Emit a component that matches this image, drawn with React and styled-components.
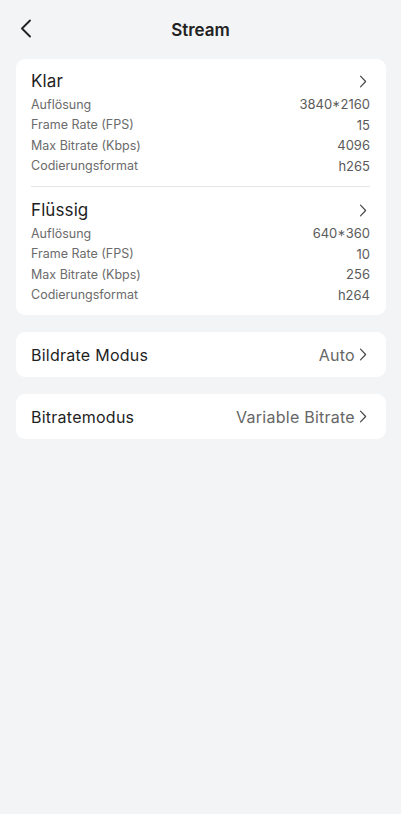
import React from 'react'
import styled, { createGlobalStyle } from 'styled-components'

const GlobalStyle = createGlobalStyle`
  html, body {
    margin: 0;
    padding: 0;
    background: #f3f4f6;
    font-family: Inter, "Noto Sans", "Liberation Sans", sans-serif;
    -webkit-font-smoothing: antialiased;
  }
`

const streams = [
  {
    name: 'Klar',
    rows: [
      ['Auflösung', '3840*2160'],
      ['Frame Rate (FPS)', '15'],
      ['Max Bitrate (Kbps)', '4096'],
      ['Codierungsformat', 'h265'],
    ],
  },
  {
    name: 'Flüssig',
    rows: [
      ['Auflösung', '640*360'],
      ['Frame Rate (FPS)', '10'],
      ['Max Bitrate (Kbps)', '256'],
      ['Codierungsformat', 'h264'],
    ],
  },
]

const settings = [
  { label: 'Bildrate Modus', value: 'Auto' },
  { label: 'Bitratemodus', value: 'Variable Bitrate' },
]

const Chevron = ({ size = 13 }) => (
  <svg width={size * 0.62} height={size} viewBox="0 0 8 13" fill="none">
    <path d="M1.5 1.2 L6.6 6.5 L1.5 11.8" stroke="#444" strokeWidth="1.15" strokeLinecap="round" strokeLinejoin="round" />
  </svg>
)

const App = () => {
  return (
    <Page>
      <GlobalStyle />
      <Header>
        <BackButton>
          <svg width="12" height="19" viewBox="0 0 12 19" fill="none">
            <path d="M10 1.5 L2 9.5 L10 17.5" stroke="#222" strokeWidth="1.9" strokeLinecap="round" strokeLinejoin="round" />
          </svg>
        </BackButton>
        <Title>Stream</Title>
      </Header>

      <Content>
        <Card>
          {streams.map((s, i) => (
            <Section key={s.name} divided={i > 0}>
              <SectionHead>
                <SectionName>{s.name}</SectionName>
                <Chevron size={13} />
              </SectionHead>
              <Rows>
                {s.rows.map(([k, v]) => (
                  <Row key={k}>
                    <RowLabel>{k}</RowLabel>
                    <RowValue>{v}</RowValue>
                  </Row>
                ))}
              </Rows>
            </Section>
          ))}
        </Card>

        {settings.map((item) => (
          <SettingCard key={item.label}>
            <SettingLabel>{item.label}</SettingLabel>
            <SettingValue>
              {item.value}
              <Chevron size={13} />
            </SettingValue>
          </SettingCard>
        ))}
      </Content>
    </Page>
  )
}

export default App

const Page = styled.div`
  min-height: 814px;
  background: #f3f4f6;
`

const Header = styled.header`
  position: relative;
  height: 59px;
  display: flex;
  align-items: center;
  justify-content: center;
`

const BackButton = styled.div`
  position: absolute;
  left: 20px;
  top: 19px;
  display: flex;
`

const Title = styled.h1`
  margin: 0;
  font-size: 17px;
  font-weight: 600;
  color: #222;
`

const Content = styled.div`
  display: flex;
  flex-direction: column;
  gap: 17px;
  padding: 0 15px 0 16px;
`

const Card = styled.div`
  background: #fff;
  border-radius: 9px;
  padding: 0 16px 0 15px;
`

const Section = styled.div`
  padding: ${(p) => (p.divided ? '12px 0 10px' : '11px 0 10px')};
  border-top: ${(p) => (p.divided ? '1px solid #e6e6e6' : 'none')};
`

const SectionHead = styled.div`
  display: flex;
  align-items: center;
  justify-content: space-between;
  height: 22px;
  padding-right: 3px;
`

const SectionName = styled.span`
  font-size: 17px;
  color: #1f1f1f;
  letter-spacing: 0.1px;
`

const Rows = styled.div`
  margin-top: 2px;
  display: flex;
  flex-direction: column;
`

const Row = styled.div`
  display: flex;
  justify-content: space-between;
  align-items: center;
  height: 20.5px;
  font-size: 12.5px;
`

const RowLabel = styled.span`
  color: #6b6b6b;
`

const RowValue = styled.span`
  color: #5a5a5a;
  font-size: 13px;
`

const SettingCard = styled.div`
  background: #fff;
  border-radius: 9px;
  height: 45px;
  display: flex;
  align-items: center;
  justify-content: space-between;
  padding: 0 19px 0 15px;
`

const SettingLabel = styled.span`
  font-size: 16px;
  color: #1f1f1f;
  letter-spacing: 0.25px;
`

const SettingValue = styled.span`
  display: flex;
  align-items: center;
  gap: 4px;
  font-size: 16px;
  color: #666;
  letter-spacing: 0.25px;
`
